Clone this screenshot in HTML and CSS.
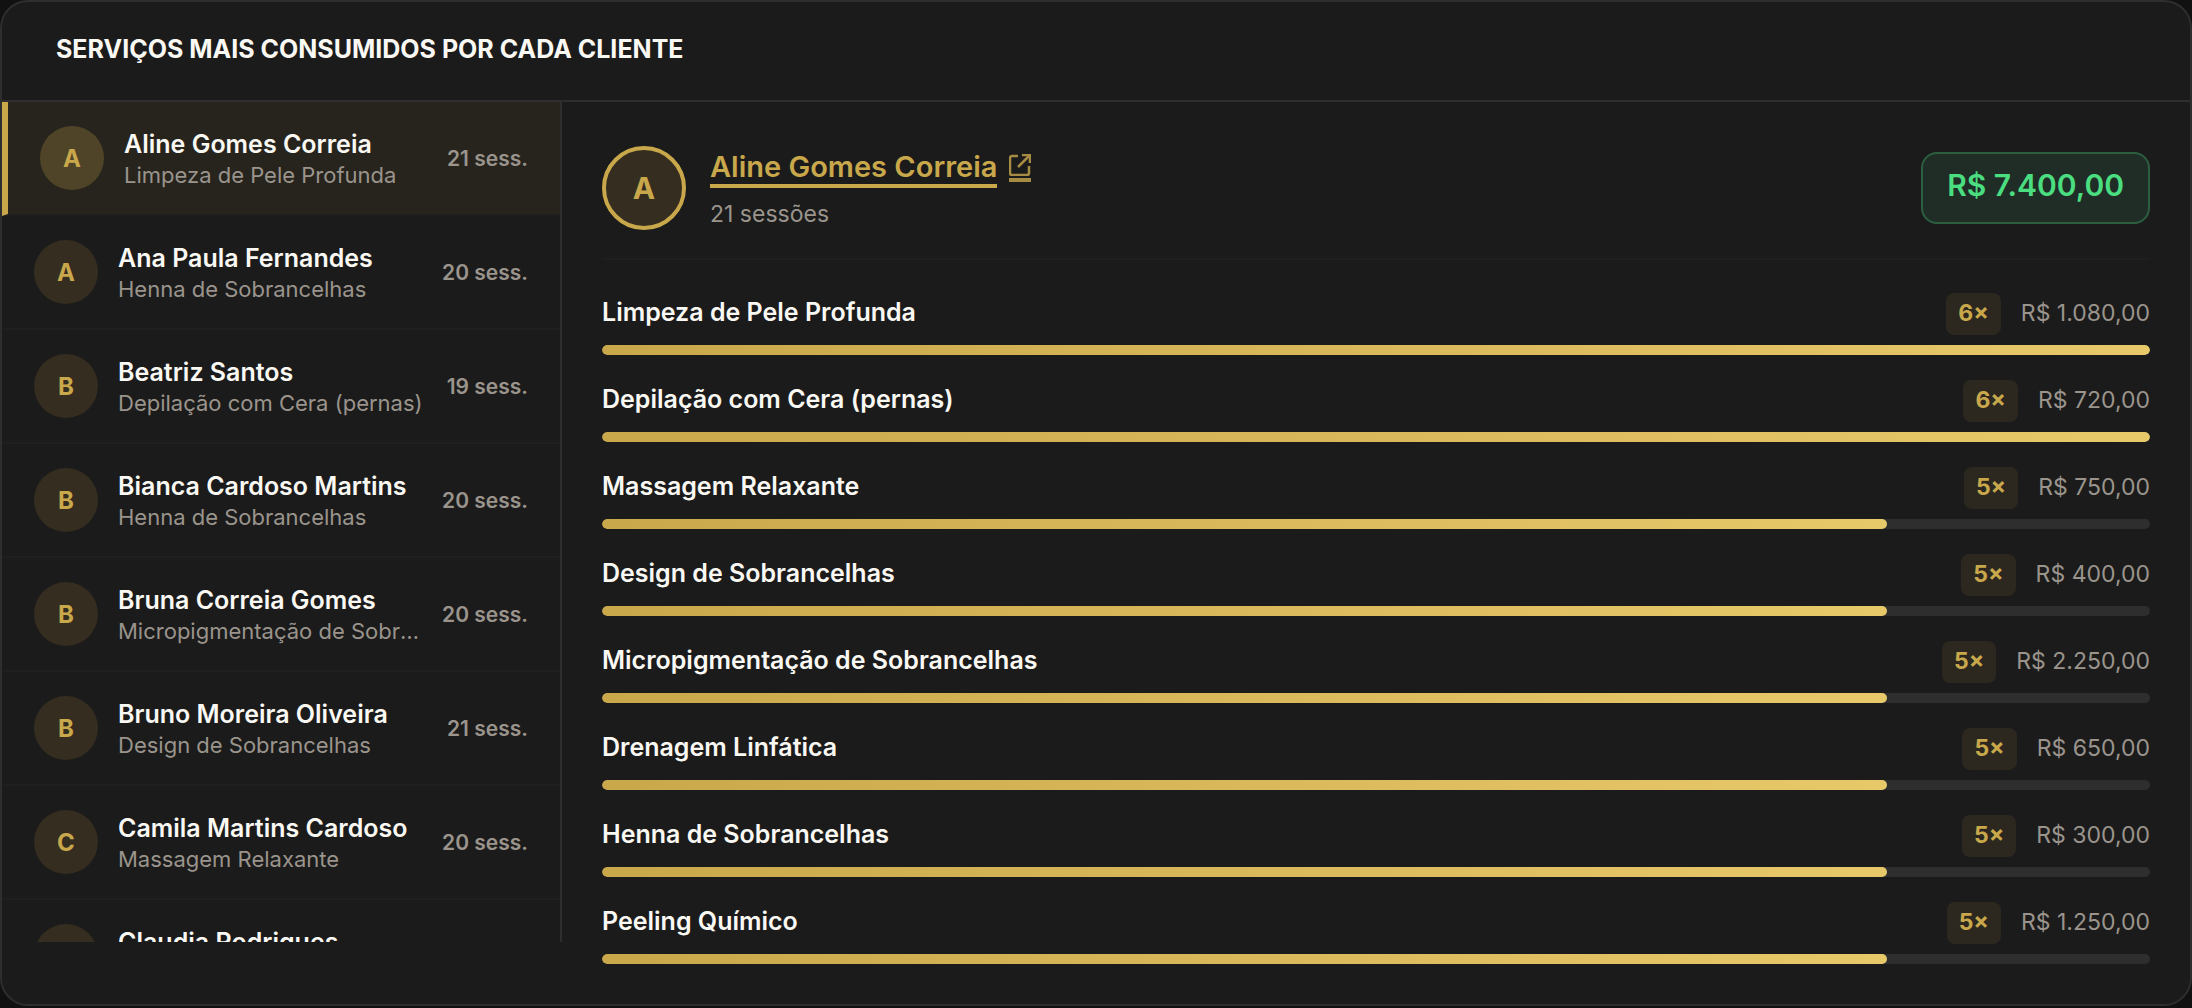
FILE: index.html
```html
<!DOCTYPE html>
<html lang="pt-BR">
<head>
    <meta charset="UTF-8">
    <meta name="viewport" content="width=device-width, initial-scale=1.0">
    <title>Serviços por Cliente</title>
    <link rel="stylesheet" href="styles.css">
</head>
<body>
    <section class="card">
        <header class="card-header">
            <h2>SERVIÇOS MAIS CONSUMIDOS POR CADA CLIENTE</h2>
        </header>
        <div class="card-body">
            <div class="client-list">
                <button type="button" class="client active">
                    <span class="avatar">A</span>
                    <span class="client-info">
                        <span class="client-name">Aline Gomes Correia</span>
                        <span class="client-top">Limpeza de Pele Profunda</span>
                    </span>
                    <span class="client-count">21 sess.</span>
                </button>
                <button type="button" class="client">
                    <span class="avatar">A</span>
                    <span class="client-info">
                        <span class="client-name">Ana Paula Fernandes</span>
                        <span class="client-top">Henna de Sobrancelhas</span>
                    </span>
                    <span class="client-count">20 sess.</span>
                </button>
                <button type="button" class="client">
                    <span class="avatar">B</span>
                    <span class="client-info">
                        <span class="client-name">Beatriz Santos</span>
                        <span class="client-top">Depilação com Cera (pernas)</span>
                    </span>
                    <span class="client-count">19 sess.</span>
                </button>
                <button type="button" class="client">
                    <span class="avatar">B</span>
                    <span class="client-info">
                        <span class="client-name">Bianca Cardoso Martins</span>
                        <span class="client-top">Henna de Sobrancelhas</span>
                    </span>
                    <span class="client-count">20 sess.</span>
                </button>
                <button type="button" class="client">
                    <span class="avatar">B</span>
                    <span class="client-info">
                        <span class="client-name">Bruna Correia Gomes</span>
                        <span class="client-top">Micropigmentação de Sobrancelhas</span>
                    </span>
                    <span class="client-count">20 sess.</span>
                </button>
                <button type="button" class="client">
                    <span class="avatar">B</span>
                    <span class="client-info">
                        <span class="client-name">Bruno Moreira Oliveira</span>
                        <span class="client-top">Design de Sobrancelhas</span>
                    </span>
                    <span class="client-count">21 sess.</span>
                </button>
                <button type="button" class="client">
                    <span class="avatar">C</span>
                    <span class="client-info">
                        <span class="client-name">Camila Martins Cardoso</span>
                        <span class="client-top">Massagem Relaxante</span>
                    </span>
                    <span class="client-count">20 sess.</span>
                </button>
                <button type="button" class="client">
                    <span class="avatar">C</span>
                    <span class="client-info">
                        <span class="client-name">Claudia Rodrigues</span>
                        <span class="client-top">Design de Sobrancelhas</span>
                    </span>
                    <span class="client-count">20 sess.</span>
                </button>
            </div>

            <div class="detail">
                <div class="detail-header">
                    <span class="avatar avatar-lg">A</span>
                    <div class="detail-info">
                        <a href="#" class="detail-link">
                            <span class="detail-name">Aline Gomes Correia</span>
                            <span class="link-icon">
                                <svg viewBox="0 0 22 22" fill="none" stroke="currentColor" stroke-width="2.5">
                                    <path d="M9 2H3a2 2 0 0 0-2 2v15a2 2 0 0 0 2 2h15a2 2 0 0 0 2-2v-7"/>
                                    <path d="M13 1h8v8"/>
                                    <path d="M9 13L21 1"/>
                                </svg>
                            </span>
                        </a>
                        <p class="detail-sessions">21 sessões</p>
                    </div>
                    <span class="total">R$ 7.400,00</span>
                </div>

                <ul class="services">
                    <li>
                        <div class="service-row">
                            <span class="service-name">Limpeza de Pele Profunda</span>
                            <span class="times">6×</span>
                            <span class="amount">R$ 1.080,00</span>
                        </div>
                        <div class="track"><div class="fill" style="width: 100%"></div></div>
                    </li>
                    <li>
                        <div class="service-row">
                            <span class="service-name">Depilação com Cera (pernas)</span>
                            <span class="times">6×</span>
                            <span class="amount">R$ 720,00</span>
                        </div>
                        <div class="track"><div class="fill" style="width: 100%"></div></div>
                    </li>
                    <li>
                        <div class="service-row">
                            <span class="service-name">Massagem Relaxante</span>
                            <span class="times">5×</span>
                            <span class="amount">R$ 750,00</span>
                        </div>
                        <div class="track"><div class="fill" style="width: 83%"></div></div>
                    </li>
                    <li>
                        <div class="service-row">
                            <span class="service-name">Design de Sobrancelhas</span>
                            <span class="times">5×</span>
                            <span class="amount">R$ 400,00</span>
                        </div>
                        <div class="track"><div class="fill" style="width: 83%"></div></div>
                    </li>
                    <li>
                        <div class="service-row">
                            <span class="service-name">Micropigmentação de Sobrancelhas</span>
                            <span class="times">5×</span>
                            <span class="amount">R$ 2.250,00</span>
                        </div>
                        <div class="track"><div class="fill" style="width: 83%"></div></div>
                    </li>
                    <li>
                        <div class="service-row">
                            <span class="service-name">Drenagem Linfática</span>
                            <span class="times">5×</span>
                            <span class="amount">R$ 650,00</span>
                        </div>
                        <div class="track"><div class="fill" style="width: 83%"></div></div>
                    </li>
                    <li>
                        <div class="service-row">
                            <span class="service-name">Henna de Sobrancelhas</span>
                            <span class="times">5×</span>
                            <span class="amount">R$ 300,00</span>
                        </div>
                        <div class="track"><div class="fill" style="width: 83%"></div></div>
                    </li>
                    <li>
                        <div class="service-row">
                            <span class="service-name">Peeling Químico</span>
                            <span class="times">5×</span>
                            <span class="amount">R$ 1.250,00</span>
                        </div>
                        <div class="track"><div class="fill" style="width: 83%"></div></div>
                    </li>
                </ul>
            </div>
        </div>
    </section>
</body>
</html>
```
FILE: styles.css
```css
* {
    margin: 0;
    padding: 0;
    box-sizing: border-box;
}

body {
    background: #111111;
    color: #faf8f3;
    font-family: Inter, sans-serif;
}

.card {
    background: #1b1b1b;
    border: 2px solid #2e2e2e;
    border-radius: 28px;
    overflow: hidden;
}

.card-header {
    padding: 30px 54px 34px;
    border-bottom: 2px solid #2e2e2e;
}

.card-header h2 {
    font-size: 25px;
    line-height: 34px;
    font-weight: 700;
}

.card-body {
    display: flex;
    align-items: flex-start;
}

/* client list */
.client-list {
    flex: 0 0 560px;
    max-height: 840px;
    overflow-y: auto;
    scrollbar-width: none;
    border-right: 2px solid #2e2e2e;
}

.client {
    display: flex;
    align-items: center;
    gap: 20px;
    width: 100%;
    padding: 24px 32px;
    background: none;
    border: none;
    border-bottom: 2px solid #1f1f1f;
    color: inherit;
    font-family: inherit;
    text-align: left;
    cursor: pointer;
}

.client.active {
    background: #27241e;
    border-left: 6px solid #c9a84c;
}

.avatar {
    display: flex;
    align-items: center;
    justify-content: center;
    flex-shrink: 0;
    width: 64px;
    height: 64px;
    border-radius: 50%;
    background: #342d20;
    color: #c9a84c;
    font-size: 24px;
    font-weight: 700;
}

.client.active .avatar {
    background: #4f4428;
}

.client-info {
    flex: 1;
    min-width: 0;
    padding-top: 2px;
}

.client-name,
.client-top {
    display: block;
    white-space: nowrap;
    overflow: hidden;
    text-overflow: ellipsis;
}

.client-name {
    font-size: 25px;
    line-height: 32px;
    font-weight: 600;
}

.client-top {
    color: #9a948c;
    font-size: 22px;
    line-height: 30px;
}

.client-count {
    color: #9a948c;
    font-size: 21px;
    font-weight: 600;
}

/* selected client */
.detail {
    flex: 1;
    min-width: 0;
    padding: 44px 40px 40px;
}

.detail-header {
    display: flex;
    align-items: center;
    gap: 24px;
    padding-bottom: 28px;
    margin-bottom: 33px;
    border-bottom: 2px solid #1f1f1f;
}

.avatar-lg {
    width: 84px;
    height: 84px;
    border: 4px solid #c9a84c;
    font-size: 30px;
}

.detail-info {
    flex: 1;
}

.detail-link {
    display: flex;
    align-items: flex-end;
    gap: 12px;
    width: fit-content;
    color: #c9a84c;
    text-decoration: none;
}

.detail-name {
    padding-top: 4px;
    border-bottom: 4px solid #c9a84c;
    font-size: 29px;
    line-height: 34px;
    font-weight: 600;
}

.link-icon {
    display: block;
    margin-bottom: 6px;
    border-bottom: 4px solid #c9a84c;
    opacity: 0.8;
}

.link-icon svg {
    display: block;
    width: 22px;
    height: 22px;
    margin-bottom: 2px;
}

.detail-sessions {
    margin-top: 10px;
    color: #9a948c;
    font-size: 23px;
    line-height: 32px;
}

.total {
    padding: 13px 24px 19px;
    background: #202d26;
    border: 2px solid #2b5f3f;
    border-radius: 16px;
    color: #4ade80;
    font-size: 30px;
    line-height: 36px;
    font-weight: 600;
}

.services {
    display: grid;
    gap: 25px;
    list-style: none;
}

.service-row {
    display: flex;
    align-items: center;
    gap: 20px;
    margin-bottom: 10px;
}

.service-name {
    flex: 1;
    padding-bottom: 4px;
    font-size: 25px;
    line-height: 32px;
    font-weight: 600;
}

.times {
    padding: 4px 12px 6px;
    background: #2c2820;
    border-radius: 8px;
    color: #c9a84c;
    font-size: 23px;
    line-height: 32px;
    font-weight: 700;
}

.amount {
    padding-bottom: 2px;
    color: #9a948c;
    font-size: 23px;
}

.track {
    height: 10px;
    background: #2e2e2e;
    border-radius: 5px;
    overflow: hidden;
}

.fill {
    height: 100%;
    background: linear-gradient(90deg, #c9a84c, #e8c96a);
    border-radius: 5px;
}
```
